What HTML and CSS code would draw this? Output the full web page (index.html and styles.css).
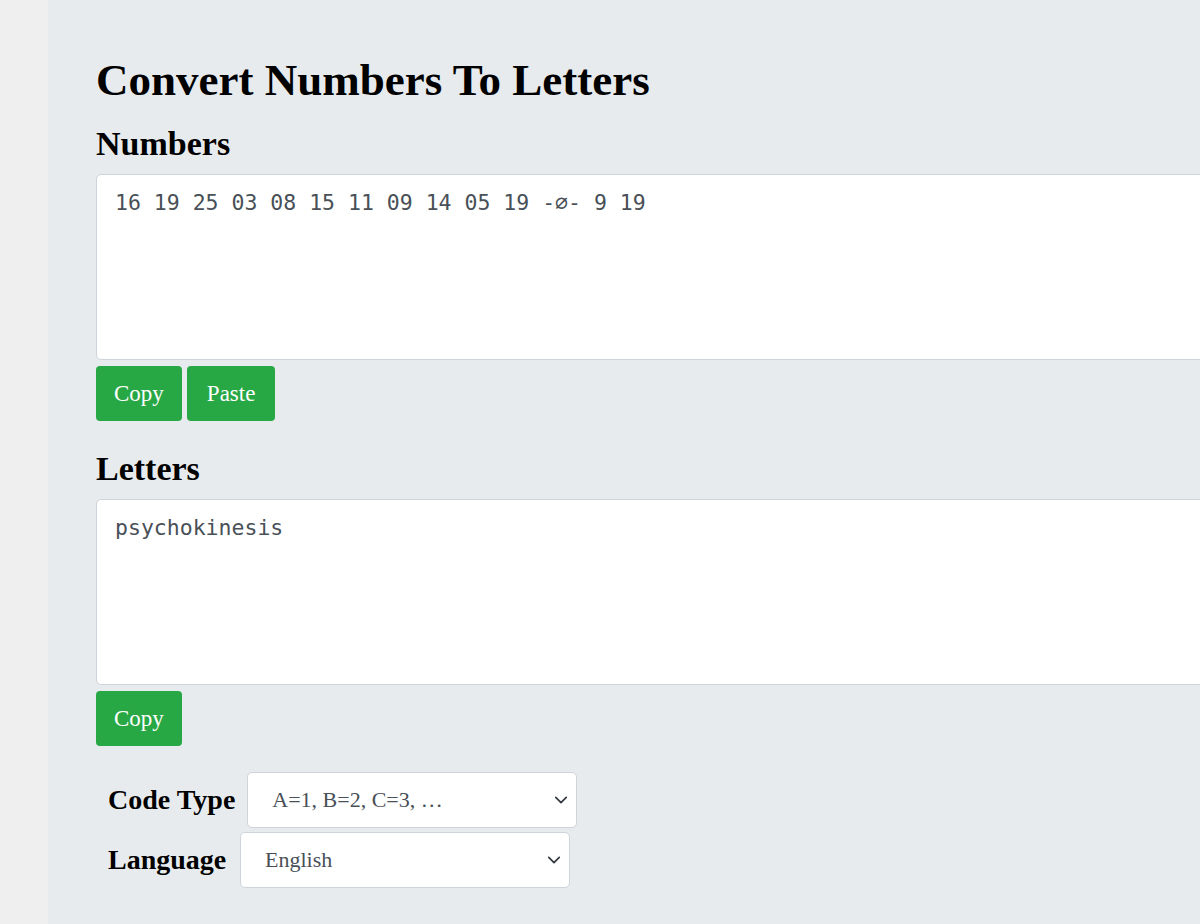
FILE: index.html
```html
<!DOCTYPE html>
<html lang="en">
<head>
<meta charset="utf-8">
<title>Convert Numbers To Letters</title>
<link rel="stylesheet" href="styles.css">
</head>
<body>
<div class="page">
  <aside class="side"></aside>
  <main class="main">
    <h1 class="title">Convert Numbers To Letters</h1>
    <h2 class="section-title">Numbers</h2>
    <textarea class="box" spellcheck="false">16 19 25 03 08 15 11 09 14 05 19 -∅- 9 19</textarea>
    <div class="actions">
      <button class="btn">Copy</button>
      <button class="btn btn-wide">Paste</button>
    </div>
    <h2 class="section-title letters">Letters</h2>
    <textarea class="box" spellcheck="false">psychokinesis</textarea>
    <div class="actions">
      <button class="btn">Copy</button>
    </div>
    <div class="options">
      <div class="opt-row">
        <label class="opt-label">Code Type</label>
        <div class="select">
          <span class="select-text">A=1, B=2, C=3, …</span>
          <svg class="chev" viewBox="0 0 16 16" width="14" height="14"><path d="M2 5l6 6 6-6" fill="none" stroke="#343a40" stroke-width="2" stroke-linecap="round" stroke-linejoin="round"/></svg>
        </div>
      </div>
      <div class="opt-row">
        <label class="opt-label lang">Language</label>
        <div class="select">
          <span class="select-text">English</span>
          <svg class="chev" viewBox="0 0 16 16" width="14" height="14"><path d="M2 5l6 6 6-6" fill="none" stroke="#343a40" stroke-width="2" stroke-linecap="round" stroke-linejoin="round"/></svg>
        </div>
      </div>
    </div>
  </main>
</div>
</body>
</html>
```
FILE: styles.css
```css
html, body {
  margin: 0;
  padding: 0;
  height: 100%;
  overflow: hidden;
}
body {
  font-family: "Liberation Serif", "DejaVu Serif", serif;
  color: #000;
}
.page {
  display: flex;
  min-height: 100%;
}
.side {
  width: 48px;
  flex: 0 0 48px;
  background: #efefef;
}
.main {
  flex: 1;
  background: #e8ebee;
  padding: 50px 0 40px 48px;
  min-width: 0;
}
.title {
  margin: 0 0 12px 0;
  font-size: 45px;
  line-height: 60px;
  font-weight: bold;
}
.section-title {
  margin: 0 0 8px 0;
  font-size: 34px;
  line-height: 44px;
  font-weight: bold;
}
.section-title.letters {
  margin-top: 26px;
}
.box {
  display: block;
  box-sizing: border-box;
  width: 1140px;
  height: 186px;
  margin: 0;
  padding: 14px 18px;
  border: 1px solid #ced4da;
  border-radius: 5px;
  background: #fff;
  color: #495057;
  font-family: "DejaVu Sans Mono", monospace;
  font-size: 21.5px;
  line-height: 28px;
  resize: none;
  outline: none;
}
.actions {
  display: flex;
  gap: 5px;
  margin-top: 6px;
}
.btn {
  height: 55px;
  padding: 0 18px;
  border: 0;
  border-radius: 4px;
  background: #28a745;
  color: #fff;
  font-family: "Liberation Serif", "DejaVu Serif", serif;
  font-size: 23px;
}
.btn-wide {
  padding: 0 20px;
}
.options {
  margin-top: 26px;
  display: flex;
  flex-direction: column;
  gap: 4px;
  padding-left: 12px;
}
.opt-row {
  display: flex;
  align-items: center;
  gap: 12px;
}
.opt-label {
  font-size: 28px;
  font-weight: bold;
}
.opt-label.lang {
  min-width: 120px;
}
.select {
  box-sizing: border-box;
  width: 330px;
  height: 56px;
  display: flex;
  align-items: center;
  justify-content: space-between;
  padding: 0 8px 0 24px;
  background: #fff;
  border: 1px solid #ced4da;
  border-radius: 5px;
  color: #495057;
  font-size: 22px;
}
```
